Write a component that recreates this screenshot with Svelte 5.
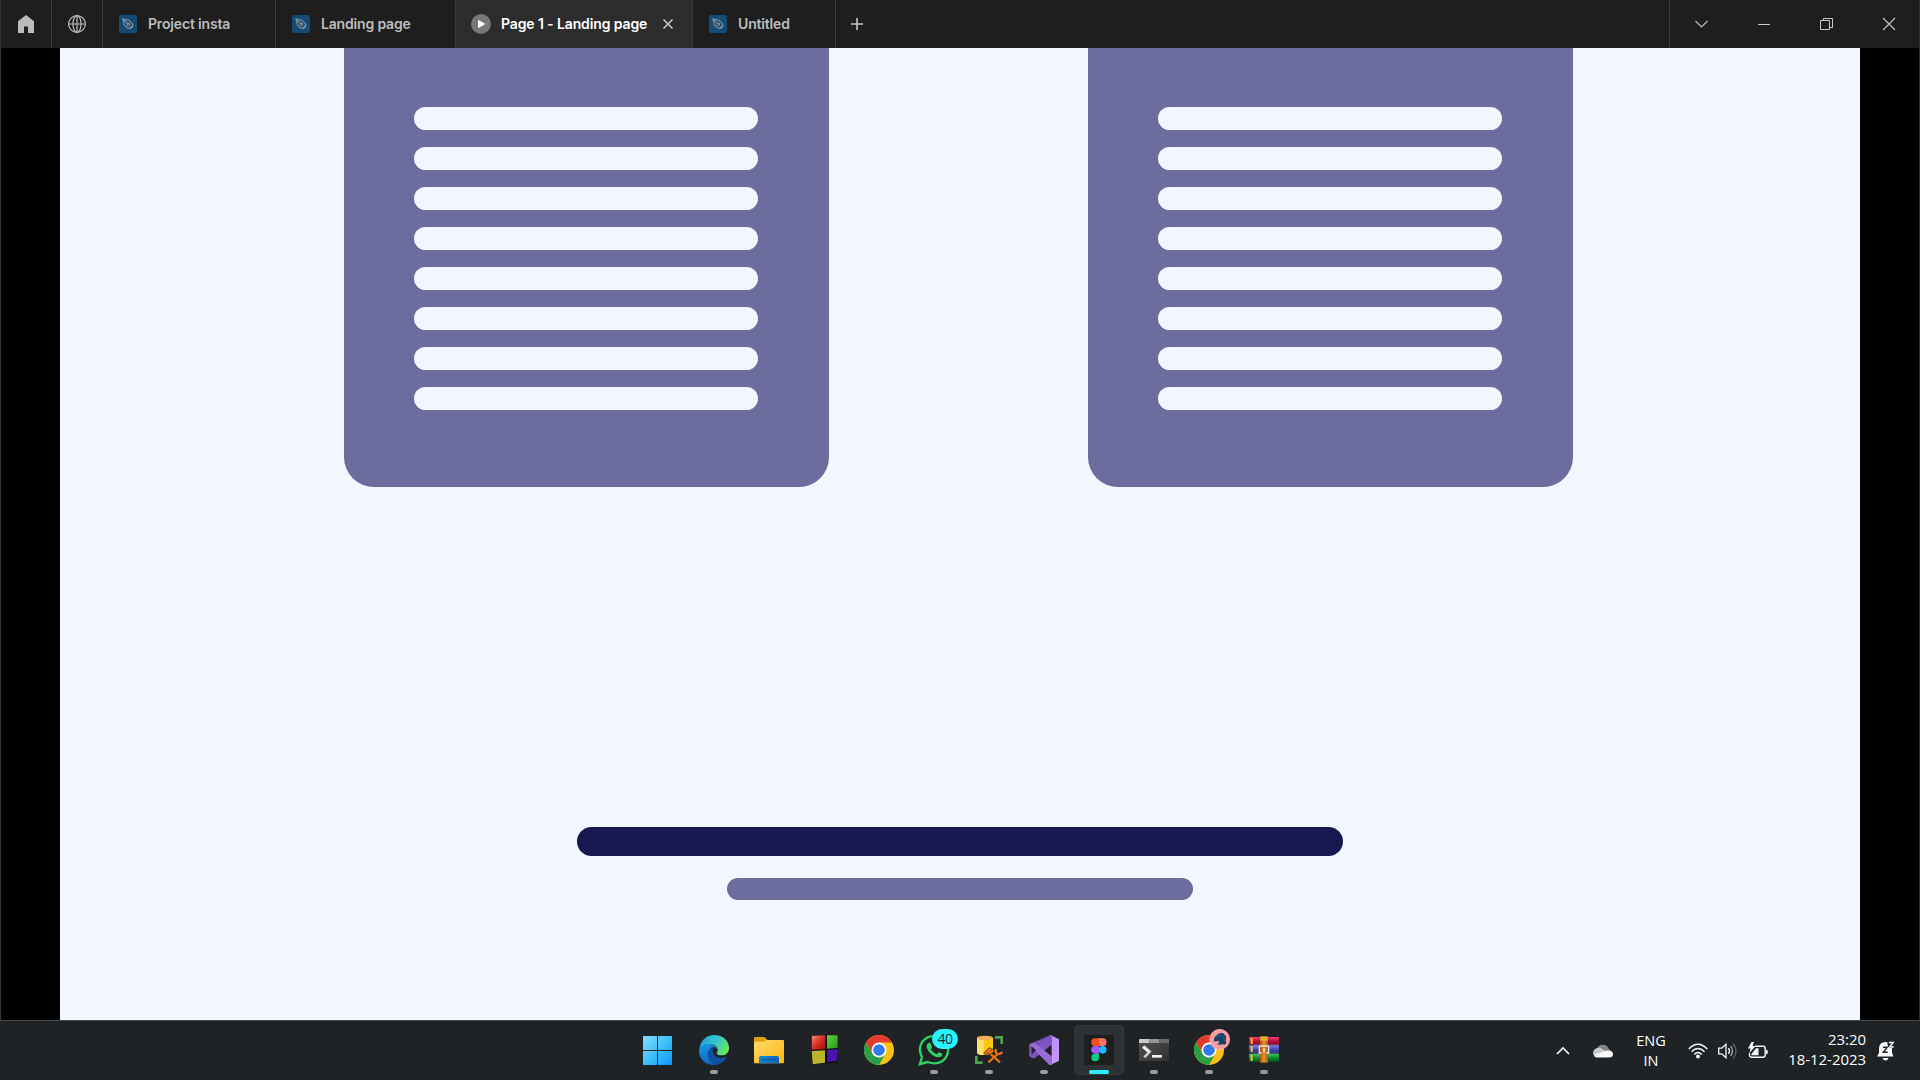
<script>
  const tabs = [
    { title: 'Project insta', kind: 'design', size: 'w173' },
    { title: 'Landing page', kind: 'design', size: 'w180' },
    { title: 'Page 1 - Landing page', kind: 'play', size: 'w237', active: true },
    { title: 'Untitled', kind: 'design', size: 'w143' }
  ];
  const apps = [
    { name: 'start' },
    { name: 'edge', running: true },
    { name: 'folder' },
    { name: 'cubes' },
    { name: 'chrome' },
    { name: 'whatsapp', running: true },
    { name: 'database', running: true },
    { name: 'studio', running: true },
    { name: 'figma', running: true, active: true },
    { name: 'terminal', running: true },
    { name: 'chrome-profile', running: true },
    { name: 'archive', running: true }
  ];
  const lines = Array(8).fill(0);
</script>

{#snippet chrome()}
  <circle cx="45" cy="45" r="45" fill="#fbc116" />
  <path d="M6 22.500A45 45 0 0 1 84 22.500H45L25.500 56.300Z" fill="#e33b2e" />
  <path d="M6 22.500A45 45 0 0 0 45 90L64.500 56.300L45 67L25.500 56.300Z" fill="#2b9f47" />
  <circle cx="45" cy="45" r="22.500" fill="#fff" />
  <circle cx="45" cy="45" r="17.500" fill="#2f7bea" />
{/snippet}

{#snippet appIcon(name)}
  <svg class="app-icon" viewBox="0 0 90 90">
    {#if name === 'start'}
      <defs>
        <linearGradient id="win" gradientUnits="userSpaceOnUse" x1="-3" y1="3" x2="84" y2="90">
          <stop offset="0" stop-color="#86defe" /><stop offset=".55" stop-color="#38bdfb" /><stop offset="1" stop-color="#0f93fb" />
        </linearGradient>
      </defs>
      <path d="M-1 3H39V45H-3V5Q-3 3-1 3ZM42 3H82Q84 3 84 5V45H42ZM-3 48H39V90H-1Q-3 90-3 88ZM42 48H84V88Q84 90 82 90H42Z" fill="url(#win)" />
    {:else if name === 'edge'}
      <defs>
        <linearGradient id="edgeTop" x1="0" y1=".3" x2="1" y2=".7">
          <stop offset="0" stop-color="#249fe0" /><stop offset=".5" stop-color="#35c5cf" /><stop offset="1" stop-color="#70eb4b" />
        </linearGradient>
        <linearGradient id="edgeSide" x1="0" y1="0" x2=".5" y2="1">
          <stop offset="0" stop-color="#1d9be8" /><stop offset="1" stop-color="#0b62bd" />
        </linearGradient>
      </defs>
      <path d="M1 43C3 17 22 0 46 0C72 0 90 18 90 38C90 53 80 61 68 61C57 61 52 57 53 53C56 50 58 44 54 38C46 24 20 24 1 43Z" fill="url(#edgeTop)" />
      <path d="M0 48C1 32 16 25 31 27C45 29 55 37 54 44C50 35 40 34 35 40C28 48 28 60 37 70C44 79 57 81 67 78C60 87 50 90 42 90C18 89 0 71 0 48Z" fill="url(#edgeSide)" />
      <path d="M40 37C25 43 22 59 30 73C35 82 44 89 52 89C65 87 76 79 83 68C84 65 82 64 79 66C66 72 50 68 44 57C40 50 40 43 45 37Z" fill="#104f9f" />
    {:else if name === 'folder'}
      <defs>
        <linearGradient id="folder" x1="0" y1="0" x2="1" y2="1">
          <stop offset="0" stop-color="#ffd969" /><stop offset="1" stop-color="#fcb714" />
        </linearGradient>
        <linearGradient id="folderPocket" x1="0" y1="0" x2="1" y2="0">
          <stop offset="0" stop-color="#0b88d8" /><stop offset="1" stop-color="#1066bd" />
        </linearGradient>
      </defs>
      <path d="M3 6H30Q34 6 37 11L40 15V24H0V9Q0 6 3 6Z" fill="#dfa007" />
      <path d="M0 20H29Q32 20 35 17L37 15H87Q90 15 90 18V82Q90 85 87 85H3Q0 85 0 82Z" fill="url(#folder)" />
      <path d="M15 85V68Q15 63 20 63H70Q75 63 75 68V85Z" fill="url(#folderPocket)" />
      <path d="M25 74H65" stroke="#064c89" stroke-width="3" />
    {:else if name === 'cubes'}
      <defs>
        <linearGradient id="cubeRed" x1="0" y1="0" x2="1" y2="1"><stop offset="0" stop-color="#f38a7b" /><stop offset=".5" stop-color="#d43022" /><stop offset="1" stop-color="#a51006" /></linearGradient>
        <linearGradient id="cubeGreen" x1="0" y1="0" x2="1" y2="1"><stop offset="0" stop-color="#62d647" /><stop offset="1" stop-color="#249512" /></linearGradient>
      </defs>
      <path d="M5 0L87 1L85 82L9 90Z" fill="#080b08" />
      <path d="M8 2L49 1V42L8 44Z" fill="url(#cubeRed)" />
      <path d="M54 1H86V39L54 41Z" fill="url(#cubeGreen)" />
      <path d="M8 48L48 46V83L11 88Z" fill="#b9b52b" />
      <path d="M54 45L86 42L84 77L54 82Z" fill="#4914ad" />
    {:else if name === 'chrome'}
      {@render chrome()}
    {:else if name === 'whatsapp'}
      <path d="M3 87L9 66C-3 45 3 19 24 8C46-2 73 5 83 26C94 50 82 76 60 83C48 87 36 85 26 81Z" fill="none" stroke="#2bd366" stroke-width="7" />
      <path d="M25 27Q29 21 34 24L39 35Q40 38 35 43Q42 54 53 58L59 52Q61 50 70 56Q71 63 63 66Q50 70 34 55Q18 38 25 27Z" fill="#2bd366" />
    {:else if name === 'database'}
      <path d="M9 8V53C9 62 57 62 57 53V8Z" fill="#f9c80f" />
      <path d="M9 8V53Q11 60 29 60V10Z" fill="#ffe06e" />
      <ellipse cx="33" cy="9" rx="24" ry="7" fill="#eeb056" />
      <path d="M63 7H83V27M7 63V83H26" fill="none" stroke="#50a34c" stroke-width="8" />
      <g fill="none" stroke="#1c1d18" stroke-width="12"><path d="M42 49L76 81M43 81L73 51" /></g>
      <g fill="none" stroke="#e56f14" stroke-width="7"><path d="M44 52L78 82M43 82L73 55" /><path d="M66 42Q62 53 70 57Q79 59 85 51" /></g>
      <path d="M29 55L45 38L57 43L52 48L56 53L48 60L41 54L35 60Z" fill="#e56f14" stroke="#3b2612" stroke-width="2" />
    {:else if name === 'studio'}
      <defs><linearGradient id="studio" x1="0" y1="0" x2="0" y2="1"><stop offset="0" stop-color="#bd8ff3" /><stop offset="1" stop-color="#c89aff" /></linearGradient></defs>
      <path d="M0 30L9 24L33 45L9 69L0 62Z" fill="#65439b" />
      <path d="M9 24L1 29V62L8 67L65 17V0Z" fill="#7650b3" />
      <path d="M62 0L68 0V29L17 70L9 69L1 62Z" fill="#8052c2" />
      <path d="M1 29L9 24L19 25L68 64V90H61Z" fill="#996bd6" />
      <path d="M64 0L90 13V77L64 90L68 85V5Z" fill="url(#studio)" />
      <path d="M8 34V58L21 46Z" fill="#24242c" />
    {:else if name === 'figma'}
      <rect width="90" height="90" rx="3" fill="#1e1e1e" />
      <path d="M33 10H45V33H33A11.500 11.500 0 0 1 33 10Z" fill="#f24e1e" />
      <path d="M45 10H56A11.500 11.500 0 0 1 56 33H45Z" fill="#ff7262" />
      <path d="M33 33H45V56H33A11.500 11.500 0 0 1 33 33Z" fill="#a259ff" />
      <circle cx="56" cy="44.500" r="11.500" fill="#1abcfe" />
      <path d="M33 56H45V67.500A11.500 11.500 0 1 1 33 56Z" fill="#0acf83" />
    {:else if name === 'terminal'}
      <defs><linearGradient id="term" x1="0" y1="0" x2="1" y2="1"><stop offset="0" stop-color="#525252" /><stop offset="1" stop-color="#303030" /></linearGradient></defs>
      <rect y="12" width="90" height="66" rx="3" fill="url(#term)" />
      <path d="M3 12H31V24H0V15Q0 12 3 12Z" fill="#cbcbcd" />
      <path d="M31 12H61V24H31Z" fill="#96969a" />
      <path d="M61 12H87Q90 12 90 15V24H61Z" fill="#6b6b6e" />
      <path d="M14 34L32 50L16 67" fill="none" stroke="#c9c9c9" stroke-width="8" />
      <path d="M12 35L30 51" stroke="#f0f0f0" stroke-width="8" />
      <path d="M39 64H69" stroke="#eee" stroke-width="8" />
    {:else if name === 'chrome-profile'}
      {@render chrome()}
      <circle cx="77" cy="13" r="30" fill="#f89ba1" stroke="#ffb6b8" stroke-width="2" />
      <path d="M60 10L66 2Q76-9 88-5L96 4V28L70 29L76 22L72 17L60 20Z" fill="#164266" />
      <path d="M66 8L74 0L82 4M88 3L93 20" stroke="#2f6688" stroke-width="3" fill="none" />
    {:else if name === 'archive'}
      <defs>
        <linearGradient id="bookRed" x1="0" y1="0" x2="0" y2="1"><stop offset="0" stop-color="#f0416f" /><stop offset=".5" stop-color="#b51240" /><stop offset="1" stop-color="#750724" /></linearGradient>
        <linearGradient id="bookBlue" x1="0" y1="0" x2="0" y2="1"><stop offset="0" stop-color="#8089eb" /><stop offset=".5" stop-color="#4048b9" /><stop offset="1" stop-color="#202663" /></linearGradient>
        <linearGradient id="bookGreen" x1="0" y1="0" x2="0" y2="1"><stop offset="0" stop-color="#43c861" /><stop offset=".5" stop-color="#138931" /><stop offset="1" stop-color="#064c18" /></linearGradient>
        <linearGradient id="belt" x1="0" y1="0" x2="1" y2="0"><stop offset="0" stop-color="#ac5010" /><stop offset=".5" stop-color="#e88f35" /><stop offset="1" stop-color="#ae5b11" /></linearGradient>
      </defs>
      <rect y="6" width="90" height="25" rx="2" fill="url(#bookRed)" />
      <rect y="31" width="90" height="25" rx="2" fill="url(#bookBlue)" />
      <rect y="56" width="90" height="25" rx="2" fill="url(#bookGreen)" />
      <path d="M8 9V27M8 34V52M8 59V77" stroke="#f8c51b" stroke-width="6" />
      <path d="M14 29H89M14 54H89" stroke="#b7a3b0" stroke-width="1" />
      <rect x="33" y="4" width="24" height="79" fill="url(#belt)" />
      <path d="M34 5H56V17H34Z" fill="#d8b72a" />
      <path d="M38 54H31V37Q31 33 35 33H55Q59 33 59 37V54H52" fill="none" stroke="#eee8df" stroke-width="4" />
      <path d="M45 40V52" stroke="#fff" stroke-width="4" />
    {/if}
  </svg>
{/snippet}

<div class="screen">
  <div class="window">
    <header class="titlebar">
      <div class="tool home">
        <svg width="18" height="20" viewBox="0 0 18 20"><path d="M9 1L17 7.300V19H11V12.500H7V19H1V7.300Z" fill="#bcbcbc" /></svg>
      </div>
      <div class="tool globe">
        <svg width="20" height="20" viewBox="0 0 20 20" fill="none" stroke="#bcbcbc" stroke-width="1.200">
          <circle cx="10" cy="10" r="8.400" /><ellipse cx="10" cy="10" rx="4" ry="8.400" /><path d="M1.600 10H18.400M10 1.600V18.400" />
        </svg>
      </div>
      {#each tabs as tab}
        <div class="tab {tab.size}" class:active={tab.active}>
          {#if tab.kind === 'play'}
            <svg class="play" width="20" height="20" viewBox="0 0 20 20"><circle cx="10" cy="10" r="10" fill="#777" /><path d="M7 5.700L14.500 10L7 14.300Z" fill="#fff" /></svg>
          {:else}
            <svg class="file" width="18" height="18" viewBox="0 0 18 18">
              <rect width="18" height="18" rx="2.500" fill="#164b74" />
              <g fill="none" stroke="#8b949b" stroke-width="1.100"><path d="M4 4L10 5.200L13.300 8.700Q14.500 11 12.300 12.700Q10 14.200 7.200 11.800L5.200 9.500Z" /><path d="M4 4L8.300 8.300" /><circle cx="9.400" cy="9.300" r="1.200" /><path d="M10.500 13.700L13.600 10.600" /></g>
            </svg>
          {/if}
          <span>{tab.title}</span>
          {#if tab.active}
            <svg class="close" width="12" height="12" viewBox="0 0 12 12"><path d="M1.500 1.500L10.500 10.500M10.500 1.500L1.500 10.500" stroke="#ccc" stroke-width="1.500" /></svg>
          {/if}
        </div>
      {/each}
      <div class="add"><svg width="14" height="14" viewBox="0 0 14 14"><path d="M7 1V13M1 7H13" stroke="#c4c4c4" stroke-width="1.600" /></svg></div>
      <div class="controls">
        <svg width="62" height="48" viewBox="0 0 62 48"><path d="M25.500 21L31.500 27L37.500 21" fill="none" stroke="#bdbdbd" stroke-width="1.100" /></svg>
        <svg width="63" height="48" viewBox="0 0 63 48"><path d="M26 24.500H38" stroke="#c8c8c8" /></svg>
        <svg width="62" height="48" viewBox="0 0 62 48" fill="none" stroke="#c8c8c8"><path d="M25.500 20.500H34.500V29.500H25.500Z" /><path d="M28.500 20V18.500H37.500V27.500H35" /></svg>
        <svg width="63" height="48" viewBox="0 0 63 48"><path d="M26 18L38 30M38 18L26 30" stroke="#c8c8c8" stroke-width="1.100" /></svg>
      </div>
    </header>

    <main class="stage">
      <div class="page">
        <div class="cards">
          {#each [0, 1] as card (card)}
            <section class="card">
              {#each lines as _}<div class="line"></div>{/each}
            </section>
          {/each}
        </div>
        <div class="footer">
          <div class="headline"></div>
          <div class="subline"></div>
        </div>
      </div>
    </main>
  </div>

  <footer class="taskbar">
    <nav class="apps">
      {#each apps as app}
        <div class="app" class:current={app.active}>
          {@render appIcon(app.name)}
          {#if app.name === 'whatsapp'}<span class="badge">40</span>{/if}
          {#if app.running}<i class="indicator"></i>{/if}
        </div>
      {/each}
    </nav>
    <div class="tray">
      <svg class="chevron" width="14" height="10" viewBox="0 0 14 10"><path d="M1 8L7 2L13 8" fill="none" stroke="#f2f2f2" stroke-width="1.700" /></svg>
      <svg class="cloud" width="20" height="14" viewBox="0 0 20 14">
        <path d="M4 6A6 6 0 0 1 15.500 4.500L19 8L10 10Z" fill="#858687" />
        <path d="M0 9Q0 5 5 3.800Q8 3.500 10 5.500L17 12H4Q0 12 0 9Z" fill="#c9c9ca" />
        <path d="M1 10.500Q6 9.500 10 7.500Q12 6.500 15 6.500Q20 6.500 20 10Q20 13.500 16 13.500H4Q1 13.500 1 10.500Z" fill="#fafafa" />
      </svg>
      <div class="lang"><span>ENG</span><span>IN</span></div>
      <svg class="wifi" width="20" height="16" viewBox="0 0 20 16" fill="none" stroke="#f5f5f5" stroke-width="1.500">
        <path d="M.8 6Q10-3.500 19.200 6M3.500 8.700Q10 2.200 16.500 8.700M6.200 11.500Q10 7.700 13.800 11.500" /><circle cx="10" cy="13.600" r="2" fill="#f5f5f5" stroke="none" />
      </svg>
      <svg class="speaker" width="20" height="18" viewBox="0 0 20 18" fill="none" stroke="#f5f5f5" stroke-width="1.300">
        <path d="M.7 6.200H3.800L8 2.300V15.700L3.800 11.800H.7Z" /><path d="M10.500 6.200Q12.500 9 10.500 11.800" /><path d="M12.700 4Q16.200 9 12.700 14" stroke="#aaa" /><path d="M15 1.500Q21 9 15 16.500" stroke="#5f6264" />
      </svg>
      <svg class="battery" width="20" height="18" viewBox="0 0 20 18">
        <path d="M7 4.200H15Q17.200 4.200 17.200 6.200V13Q17.200 15.200 15 15.200H4Q1.500 15.200 1.500 13V11" fill="none" stroke="#f5f5f5" stroke-width="1.400" />
        <path d="M18 7.500Q20 8 20 10Q20 12 18 12.500Z" fill="#f5f5f5" /><path d="M8 6.200H10.500V13.300H3.500V12Z" fill="#f5f5f5" />
        <path d="M3.500 0L0 6.500H2.500L1.500 11L7.500 4H4.500L6 0Z" fill="#f5f5f5" />
      </svg>
      <div class="clock"><span>23:20</span><span>18-12-2023</span></div>
      <svg class="bell" width="18" height="20" viewBox="0 0 18 20">
        <path d="M2 8Q2 1 8.500 1Q15 1 15 8V12L16.500 15.500H0L2 12Z" fill="#fafafa" /><path d="M5.500 17H11.500Q10.500 19.500 8.500 19.500Q6.500 19.500 5.500 17Z" fill="#fafafa" />
        <path d="M10.500 0H18V7H12L10.500 4Z" fill="#202427" />
        <path d="M12 1.500H16.200L12.700 6H16.700" fill="none" stroke="#fafafa" stroke-width="1.400" /><path d="M6 6.200H10.300L6.300 11.200H10.700" fill="none" stroke="#202427" stroke-width="1.400" />
      </svg>
    </div>
  </footer>
</div>

<style>
  :global(body) { margin: 0; overflow: hidden; background: #000; }
  * { box-sizing: border-box; }
  svg { display: block; flex: none; overflow: visible; }
  .screen { width: 1920px; height: 1080px; display: flex; flex-direction: column; }
  .window { height: 1020px; border-left: 1px solid #343434; border-right: 1px solid #2e2e2e; background: #000; }
  .titlebar { height: 48px; display: flex; background: #1e1e1e; font: 500 14px Inter, sans-serif; color: #bcbcbc; }
  .tool, .tab { border-right: 1px solid #3a3a3a; display: flex; align-items: center; }
  .tool { width: 51px; justify-content: center; }
  .tab { padding: 0 0 1px 16px; white-space: nowrap; }
  .tab span { margin-left: 11px; font-weight: 600; letter-spacing: -0.17px; }
  .w173 { width: 173px; }
  .w180 { width: 180px; }
  .w237 { width: 237px; }
  .w143 { width: 143px; }
  .tab.active { background: #2c2c2c; color: #fff; padding-left: 15px; }
  .tab.active span { margin-left: 10px; letter-spacing: -0.12px; }
  .close { margin-left: 15px; }
  .add { width: 42px; display: flex; align-items: center; justify-content: center; }
  .controls { display: flex; width: 250px; margin-left: auto; border-left: 1px solid #3a3a3a; }
  .stage { height: 972px; padding: 0 59px; }
  .page { height: 100%; background: #f1f6ff; display: flex; flex-direction: column; align-items: center; justify-content: space-between; }
  .cards { width: 1229px; display: flex; justify-content: space-between; margin-right: 3px; }
  .card { width: 485px; height: 439px; padding: 59px 71px 0 70px; background: #6c6d9e; border-radius: 0 0 30px 30px; display: flex; flex-direction: column; gap: 17px; }
  .line { height: 23px; flex: none; border-radius: 12px; background: #f1f6ff; }
  .footer { display: flex; flex-direction: column; align-items: center; gap: 22px; padding-bottom: 120px; }
  .headline { width: 766px; height: 29px; border-radius: 15px; background: #15194f; }
  .subline { width: 466px; height: 22px; border-radius: 11px; background: #6c6d9e; }
  .taskbar { height: 60px; border-top: 1px solid #444a4d; background: #1f2326; display: flex; justify-content: space-between; padding-left: 634px; color: #fff; font: 15px "Open Sans", sans-serif; }
  .apps { display: flex; gap: 5px; padding-top: 4px; }
  .app { width: 50px; height: 50px; display: flex; justify-content: center; padding-top: 10px; position: relative; border-radius: 5px; }
  .current { background: #2e3235; box-shadow: inset 0 0 0 1px #35393c; }
  .app-icon { width: 30px; height: 30px; }
  .indicator { position: absolute; bottom: 1px; left: 21px; width: 8px; height: 4px; border-radius: 2px; background: #9a9c9e; }
  .current .indicator { left: 15px; width: 20px; background: #29f0ff; }
  .badge { position: absolute; left: 23px; top: 4px; width: 26px; height: 20px; border-radius: 10px; background: #29f3ff; color: #10282b; font-size: 14px; letter-spacing: -0.5px; line-height: 20px; text-align: center; }
  .tray { display: flex; align-items: center; padding-right: 25px; }
  .cloud { margin-left: 23px; }
  .lang { display: flex; flex-direction: column; align-items: center; line-height: 20px; width: 34px; margin-left: 21px; font-size: 14.500px; }
  .wifi { margin-left: 20px; }
  .speaker { margin-left: 10px; }
  .battery { margin-left: 10px; }
  .clock { display: flex; flex-direction: column; align-items: flex-end; line-height: 20px; margin-left: 18px; width: 80px; padding-bottom: 3px; letter-spacing: -0.05px; }
  .bell { margin-left: 11px; }
</style>
